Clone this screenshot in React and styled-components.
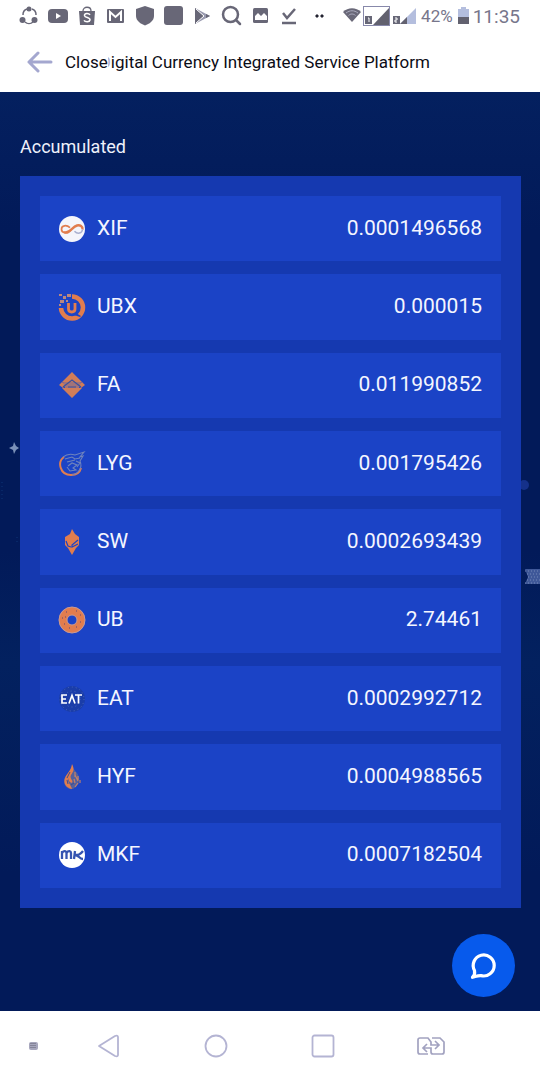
import React from 'react';
import styled, { createGlobalStyle } from 'styled-components';

const balances = [
  { symbol: 'XIF', amount: '0.0001496568' },
  { symbol: 'UBX', amount: '0.000015' },
  { symbol: 'FA', amount: '0.011990852' },
  { symbol: 'LYG', amount: '0.001795426' },
  { symbol: 'SW', amount: '0.0002693439' },
  { symbol: 'UB', amount: '2.74461' },
  { symbol: 'EAT', amount: '0.0002992712' },
  { symbol: 'HYF', amount: '0.0004988565' },
  { symbol: 'MKF', amount: '0.0007182504' },
];

const orange = '#e17d4e';
const row = '#1b43c6';

const coins = {
  XIF: (
    <>
      <circle cx="14" cy="14" r="13" fill="#f4f5fb" />
      <path d="M13 15C9 19 3.500 18 3.500 14.200c0-4 5-4.600 8.500-1.500" fill="none" stroke={orange} strokeWidth="1.700" />
      <path d="M6 17c5 3 8-5 13-6.500 3-.8 6 1 5.500 4" fill="none" stroke={orange} strokeWidth="2.400" />
      <path d="M24.500 14.500c-.4 4-5 5-8 1.700" fill="none" stroke="#a9b0cf" strokeWidth="1.500" />
    </>
  ),
  UBX: (
    <>
      <path d="M14 3.500A11 11 0 1 1 3 15" fill="none" stroke={orange} strokeWidth="4.500" />
      <path d="M10.500 10v6c0 4 6.500 4 6.500 0v-6" fill="none" stroke={orange} strokeWidth="2.800" />
      <path d="M18 20l5 3-1 1-6-2z" fill={row} />
      <path d="M1 1h3v2H1zM5 3h3v3H5zM9 1h4v3H9zM2 7h4v3H2zM8 7h2v2H8zM1 11h2v2H1z" fill="#b9877f" />
    </>
  ),
  FA: (
    <>
      <path d="M14 1l10 10H4zM4 11l-3 3 4 3 3-3zM24 11l3 3-4 3-3-3zM4 17h20L14 27z" fill="#d07d59" />
      <path d="M5 11h18l-2 6H7z" fill="#a27379" />
      <path d="M5 16l9-7 9 7M10 16h8" fill="none" stroke="#3b519f" strokeWidth="1.200" />
    </>
  ),
  LYG: (
    <>
      <path d="M6 7C-1 12 2 25 13 25c6 0 9-3 10-7" fill="none" stroke={orange} strokeWidth="2" />
      <path
        d="M5 7c5-4 9-3 12-2l9-3-4 5 3-1-3 5c3 7-2 13-8 14M7 9l7-2 3 2 5-1M9 12l8-2M10 16l4-3 5 2-4 3 3 2-6 1-3-4M18 11l4 2-3 4"
        fill="none"
        stroke="#6f83bd"
        strokeWidth="1.100"
      />
    </>
  ),
  SW: (
    <>
      <path d="M14 1l3 5 4 3v8l-3 3-4 7-4-7-3-3V9l5-3z" fill={orange} />
      <path d="M8 13l2 5 3 1M20 12l-6 5v2l6-3" fill="none" stroke={row} strokeWidth="1.200" />
    </>
  ),
  UB: (
    <>
      <circle cx="14" cy="14" r="9" fill="none" stroke={orange} strokeWidth="8" />
      <circle cx="14" cy="14" r="13" fill="none" stroke="#c99a94" />
      <circle cx="14" cy="14" r="5" fill="none" stroke="#c99a94" />
      <path d="M8 6h1M18 5h1M22 9h1M4 12h1M22 16h1M6 18h1M11 22h1M18 21h1M7 11h1" stroke="#8a5868" strokeWidth="1.300" />
    </>
  ),
  EAT: (
    <>
      <circle cx="14" cy="14" r="13" fill="#1a3da9" />
      <circle cx="14" cy="14" r="12" fill="none" stroke="#4a67bd" strokeDasharray="1 3" />
      <circle cx="14" cy="14" r="8" fill="none" stroke="#4a67bd" strokeDasharray="1 3" />
      <path d="M9 10H4v8h5M4 14h4M11 18.500l3-8 3 8M17 10h7M20.500 10v8.500" fill="none" stroke="#fff" strokeWidth="1.700" />
    </>
  ),
  HYF: (
    <>
      <path d="M14 2c1 5 5 6 7 12 1 4-1 9-6 12-5 1-9-3-9-8 0-6 7-8 8-16z" fill="#54609d" />
      <path d="M14 1c3 6 1 8-1 11-2 4 3 5 1 8-3-1-3-2-4-5-1 4 3 7 4 11-6-1-9-6-7-11 2-5 6-7 7-14z" fill={orange} />
      <path d="M17 9v5M20 13v4M16 16l1 4M20 20l-3 4M17 12l3 6M22 17v3" stroke="#c28069" strokeWidth="1.200" />
      <path d="M12 9l-3 6M16 20l-3 2M9 17l1 4" stroke="#3d4b91" />
    </>
  ),
  MKF: (
    <>
      <circle cx="14" cy="14" r="13" fill="#fff" />
      <path d="M4 18v-8M4 12c2-3 4.500-2 4.500 0v6M8.500 12c2-3 4.500-2 4.500 0v6M17 10l-1 8M25 10c-3 4-5 4-8 4 4 0 4 4 8 4" fill="none" stroke="#3554b1" strokeWidth="2.300" />
    </>
  ),
};

const StatusIcons = [
  <g key="share" fill="none" stroke="currentColor" strokeWidth="1.500">
    <path d="M9 4a6 6 0 0 0-4 6M14 4a6 6 0 0 1 4 6M7 17a6 6 0 0 0 8 0" />
    <g fill="currentColor" stroke="none"><circle cx="11" cy="4" r="2.500" /><circle cx="4.500" cy="15" r="3" /><circle cx="16.500" cy="15" r="3" /></g>
  </g>,
  <g key="video">
    <rect x="1" y="4" width="20" height="14" rx="4" fill="currentColor" />
    <path d="M9 8l5 3-5 3z" fill="#fff" />
  </g>,
  <g key="shop">
    <path d="M3 6h16l-1 14H4z" fill="currentColor" />
    <path d="M7 6c0-5 8-5 8 0" fill="none" stroke="currentColor" strokeWidth="1.300" />
    <path d="M14 10c-1-2-6-2-5.500.6.500 2.400 6 1.600 5.500 4.400-.5 2.500-5 2-6 .3" fill="none" stroke="#fff" strokeWidth="1.500" />
  </g>,
  <g key="mail">
    <rect x="2" y="4" width="17" height="14" rx="1" fill="currentColor" />
    <path d="M5 16V7l5.500 5L16 7v9" fill="none" stroke="#fff" strokeWidth="2" />
  </g>,
  <path key="shield" d="M11 1l9 3v7c0 5-5 8-9 9.500C7 19 2 16 2 11V4z" fill="currentColor" />,
  <rect key="square" x="1" y="1" width="19" height="19" rx="3" fill="currentColor" />,
  <g key="play">
    <path d="M3 3l15 8-15 8z" fill="#9a9bb0" />
    <path d="M3 3l9 8-9 8zM14 9l4 2-4 2z" fill="currentColor" />
    <path d="M4 4l8 7-8 7" fill="none" stroke="#fff" />
  </g>,
  <g key="search" fill="none" stroke="currentColor" strokeWidth="2.500">
    <circle cx="9.500" cy="9.500" r="7.500" />
    <path d="M15 15l4 4" strokeLinecap="round" />
  </g>,
  <g key="image">
    <rect x="3" y="3" width="15" height="15" rx="1.500" fill="currentColor" />
    <path d="M5 15v-4l3-3 3 3 3-3 3 3v4z" fill="#fff" />
  </g>,
  <path key="check" d="M4 8l4 5 8-9M3 18h14" fill="none" stroke="currentColor" strokeWidth="2.500" />,
  <path key="more" d="M8 10h2v2H8zM13 10h2v2h-2z" fill="#222230" stroke="#222230" />,
];

const StatusBar = () => (
  <Status>
    <Notifications>
      {StatusIcons.map((icon) => (
        <svg key={icon.key} width="22" height="22" viewBox="0 0 22 22">{icon}</svg>
      ))}
    </Notifications>
    <Indicators>
      <svg width="74" height="22" viewBox="0 0 74 22">
        <path d="M0 7c5-5 13-5 18 0l-9 10z" fill="#696878" />
        <path d="M3 8c4-3 8-3 12 0M5.500 10.500c2-2 5-2 7 0" fill="none" stroke="#aaaabd" />
        <rect x="20.500" y="1.500" width="26" height="19" fill="none" stroke="#8788aa" />
        <path d="M46 3v17H30z" fill="#62616f" />
        <rect x="22" y="11" width="7" height="8" fill="#676777" />
        <path d="M25 13h1v4" fill="none" stroke="#fff" />
        <path d="M73 3v16H57z" fill="#b4bede" />
        <path d="M64 12v7h-7z" fill="#62616f" />
        <rect x="50" y="11" width="7" height="8" fill="#676777" />
        <path d="M52 13h2v2h-2v2h2" fill="none" stroke="#fff" />
      </svg>
      <Battery>42%</Battery>
      <svg width="11" height="18" viewBox="0 0 11 18">
        <path d="M3 0h5v2h3v8H0V2h3z" fill="#b4bede" />
        <path d="M0 10h11v7H0z" fill="#62616f" />
      </svg>
      <Clock>11:35</Clock>
    </Indicators>
  </Status>
);

const App = () => (
  <Page>
    <GlobalStyle />
    <StatusBar />
    <AppBar>
      <BackButton aria-label="Back">
        <svg width="26" height="22" viewBox="0 0 26 22" fill="none" stroke="#a4a7cf" strokeWidth="3" strokeLinecap="round" strokeLinejoin="round">
          <path d="M11 2L2 11l9 9M2 11h22" />
        </svg>
      </BackButton>
      <CloseButton>Close</CloseButton>
      <Title><Faded>D</Faded>igital Currency Integrated Service Platform</Title>
    </AppBar>
    <Main>
      <Sky viewBox="0 0 540 919" preserveAspectRatio="none" aria-hidden="true">
        <path d="M14 350l2 4 3 2-3 2-2 4-1-4-4-2 4-2z" fill="#7b91b8" />
        <circle cx="524" cy="393" r="5" fill="#15318a" />
        <path d="M525 477h15v15h-15l3-7z" fill="#3f5899" />
        <path d="M525 479h15M527 482h13M528 485h12M527 488h13M525 491h15" stroke="#7488b8" strokeDasharray="1 2" />
        <path d="M2 390v20M17 445v8" stroke="#0d3477" strokeDasharray="1 3" />
      </Sky>
      <Heading>Accumulated</Heading>
      <Card>
        {balances.map(({ symbol, amount }) => (
          <Row key={symbol}>
            <svg width="28" height="28" viewBox="0 0 28 28" aria-hidden="true">{coins[symbol]}</svg>
            <Symbol>{symbol}</Symbol>
            <Amount>{amount}</Amount>
          </Row>
        ))}
      </Card>
      <ChatButton aria-label="Chat">
        <svg width="28" height="28" viewBox="0 0 28 28" fill="none" stroke="#fff" strokeWidth="3.200" strokeLinecap="round" strokeLinejoin="round">
          <path d="M4.500 18.500A10.500 10.500 0 1 1 11 23.600c-3-.2-5 .8-8.500 1.700 1.800-1.500 2.500-4 2-6.800z" />
        </svg>
      </ChatButton>
    </Main>
    <NavBar>
      <NavButton aria-label="Hide" $small>
        <svg width="10" height="10" viewBox="0 0 10 10">
          <rect x="1" y="1" width="9" height="8" rx="2" fill="#a7a7bd" />
          <path d="M3 2v6M5 2v6M7 2v6" stroke="#636374" strokeDasharray="1 1" />
        </svg>
      </NavButton>
      <NavButton aria-label="Back">
        <svg width="26" height="26" viewBox="0 0 26 26" fill="none" stroke="#b4b4d3" strokeWidth="1.800" strokeLinejoin="round">
          <path d="M4 13L20 3q3-1 3 1v18q0 2-3 1z" />
        </svg>
      </NavButton>
      <NavButton aria-label="Home">
        <svg width="26" height="26" viewBox="0 0 26 26" fill="none" stroke="#b4b4d3" strokeWidth="1.800">
          <circle cx="13" cy="13" r="10.500" />
        </svg>
      </NavButton>
      <NavButton aria-label="Recent apps">
        <svg width="26" height="26" viewBox="0 0 26 26" fill="none" stroke="#b4b4d3" strokeWidth="1.800">
          <rect x="2.500" y="2.500" width="21" height="21" rx="2" />
        </svg>
      </NavButton>
      <NavButton aria-label="Switch app">
        <svg width="30" height="22" viewBox="0 0 30 22" fill="none" stroke="#a2a2c0" strokeWidth="1.700">
          <path d="M12 19H4q-2 0-2-2V5q0-2 2-2h8l3 4v3h7M19 6l4 4-4 4M16 3h8l4 4v10q0 2-2 2h-9q-2 0-2-2v-4H8M11 9l-4 4 4 4" />
        </svg>
      </NavButton>
    </NavBar>
  </Page>
);

export default App;

// Styled-components
const GlobalStyle = createGlobalStyle`
  * {
    box-sizing: border-box;
  }

  body {
    margin: 0;
    font-family: Roboto, "Liberation Sans", sans-serif;
  }

  button {
    padding: 0;
    border: 0;
    background: none;
    font: inherit;
    color: inherit;
    cursor: pointer;
  }

  svg {
    display: block;
    flex-shrink: 0;
  }
`;

const Page = styled.div`
  display: flex;
  flex-direction: column;
  min-height: 100vh;
  background: #fff;
`;

const Status = styled.div`
  display: flex;
  justify-content: space-between;
  align-items: center;
  height: 32px;
  padding: 0 20px 0 18px;
  color: #686777;
`;

const Notifications = styled.div`
  display: flex;
  gap: 7px;
`;

const Indicators = styled.div`
  display: flex;
  align-items: center;
`;

const Battery = styled.span`
  margin: 0 5px 0 4px;
  font-size: 17px;
  color: #77768b;
`;

const Clock = styled.span`
  margin-left: 4px;
  font-size: 19px;
  color: #77768b;
`;

const AppBar = styled.header`
  display: flex;
  align-items: center;
  height: 60px;
  padding-left: 27px;
  white-space: nowrap;
  color: #0c0c16;
  font-size: 17px;
`;

const BackButton = styled.button`
  margin-right: 12px;
`;

// Close stays on top of a long page title
const CloseButton = styled.button`
  z-index: 1;
  background: #fff;
`;

const Title = styled.h1`
  margin: 0 0 0 -8px;
  font-size: 17px;
  font-weight: 400;
`;

const Faded = styled.span`
  color: #b3b3ce;
`;

const Main = styled.main`
  position: relative;
  flex: 1;
  display: flex;
  flex-direction: column;
  padding: 42px 19px 103px 20px;
  background: linear-gradient(#04205f, #021a59 15%, #021a59 50%, #03215f 62%, #021a59 85%);
`;

const Sky = styled.svg`
  position: absolute;
  inset: 0;
  width: 100%;
  height: 100%;
`;

const Heading = styled.h2`
  margin: 0 0 16px;
  font-size: 18px;
  font-weight: 400;
  line-height: 26px;
  color: #eef1fb;
`;

const Card = styled.ul`
  position: relative;
  flex: 1;
  display: flex;
  flex-direction: column;
  gap: 13px;
  margin: 0;
  padding: 20px;
  list-style: none;
  background: #1539b0;
`;

const Row = styled.li`
  flex: 1;
  display: flex;
  align-items: center;
  min-height: 48px;
  padding: 0 19px 0 18px;
  font-size: 21px;
  color: #f4f6ff;
  background: #1b43c6;
`;

const Symbol = styled.span`
  margin-left: 11px;
  padding-bottom: 2px;
`;

const Amount = styled.span`
  margin-left: auto;
  padding-bottom: 2px;
`;

const ChatButton = styled.button`
  position: absolute;
  right: 25px;
  bottom: 14px;
  display: flex;
  align-items: center;
  justify-content: center;
  width: 63px;
  height: 63px;
  border-radius: 50%;
  background: #075aec;
`;

const NavBar = styled.nav`
  display: flex;
  align-items: center;
  height: 69px;
  padding-right: 55px;
`;

const NavButton = styled.button`
  flex: ${(props) => (props.$small ? '0 0 54px' : '1')};
  display: flex;
  justify-content: ${(props) => (props.$small ? 'flex-end' : 'center')};
  padding-right: ${(props) => (props.$small ? '16px' : '0')};
`;
